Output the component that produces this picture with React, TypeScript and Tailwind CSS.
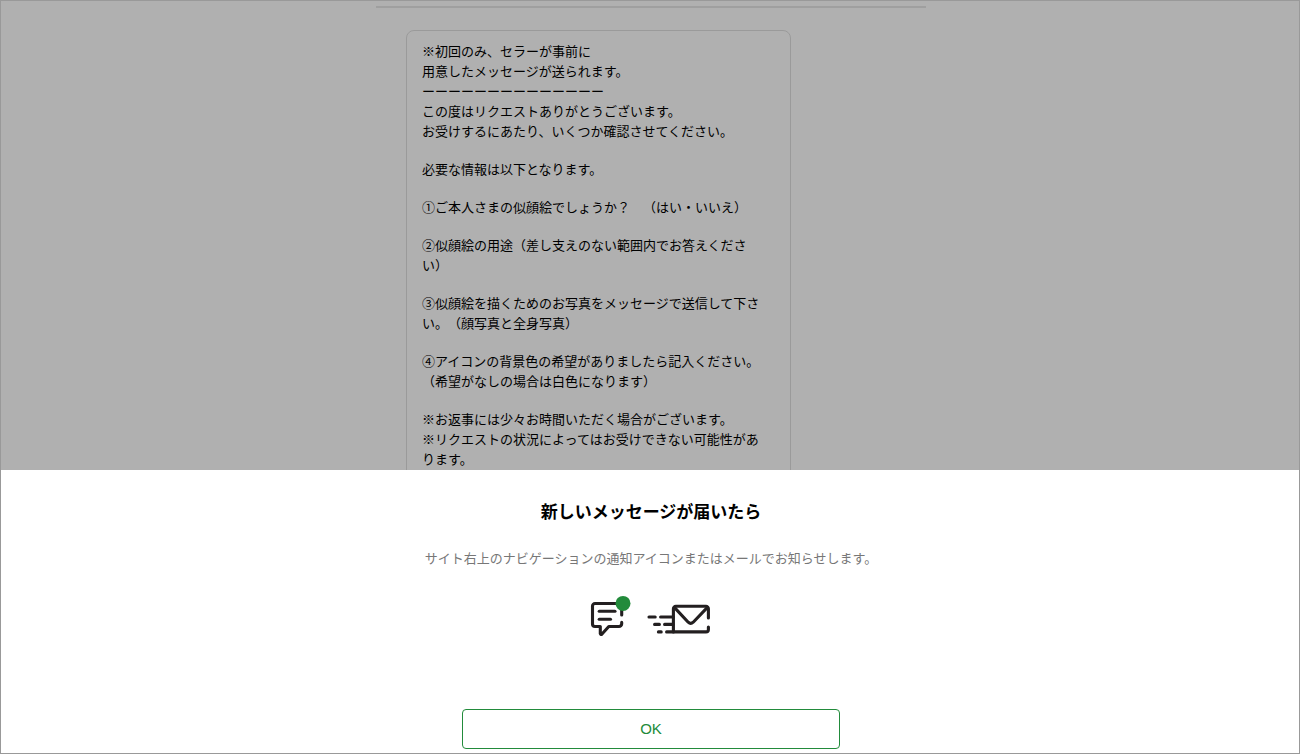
import React, { ReactNode } from 'react';

interface MessageBlock {
  lines: string[];
}

const messageBlocks: MessageBlock[] = [
  {
    lines: [
      '※初回のみ、セラーが事前に',
      '用意したメッセージが送られます。',
      'ーーーーーーーーーーーーーー',
      'この度はリクエストありがとうございます。',
      'お受けするにあたり、いくつか確認させてください。',
    ],
  },
  { lines: ['必要な情報は以下となります。'] },
  { lines: ['①ご本人さまの似顔絵でしょうか？　（はい・いいえ）'] },
  { lines: ['②似顔絵の用途（差し支えのない範囲内でお答えください）'] },
  { lines: ['③似顔絵を描くためのお写真をメッセージで送信して下さい。（顔写真と全身写真）'] },
  {
    lines: [
      '④アイコンの背景色の希望がありましたら記入ください。',
      '（希望がなしの場合は白色になります）',
    ],
  },
  {
    lines: [
      '※お返事には少々お時間いただく場合がございます。',
      '※リクエストの状況によってはお受けできない可能性があります。',
    ],
  },
];

const ChatIcon: React.FC = () => (
  <svg width="42" height="42" viewBox="0 0 42 42" fill="none" aria-hidden="true">
    <g stroke="#231f20" strokeWidth="3.1" strokeLinecap="round" strokeLinejoin="round">
      <path d="M27 8.5H5A2.5 2.5 0 0 0 2.5 11V29A2.5 2.5 0 0 0 5 31.5H10.3V38.6Q10.7 40.2 12 39L18.8 31.5H29A2.7 2.7 0 0 0 31.7 28.8V27.4" />
      <path d="M31.7 15V20" />
      <path d="M9.2 16.3H25" />
      <path d="M9.2 24.3H20.5" />
    </g>
    <circle cx="33" cy="8.4" r="7.5" fill="#228b3b" />
  </svg>
);

const MailIcon: React.FC = () => (
  <svg width="66" height="42" viewBox="0 0 66 42" fill="none" aria-hidden="true">
    <g stroke="#231f20" strokeWidth="3.1" strokeLinecap="round" strokeLinejoin="round">
      <path d="M62.4 23V13.7A2.4 2.4 0 0 0 60 11.3H29.8A2.4 2.4 0 0 0 27.4 13.7V36.9" />
      <path d="M62.4 32V34.5A2.4 2.4 0 0 1 60 36.9H20.6" />
      <path d="M28.6 12.6L42.2 27.2Q44.7 29.6 47.2 27.2L61.2 12.6" />
      <path d="M3 22H9.2M14.6 22H27" />
      <path d="M8.6 29.4H13.4M18.6 29.4H27" />
      <path d="M12.4 36.9H15.2" />
    </g>
  </svg>
);

// Page content that stays visible, dimmed, above the sheet
const DimmedPage: React.FC<{ children: ReactNode }> = ({ children }) => (
  <main className="relative flex-1 min-h-0 overflow-hidden bg-white">
    <div className="pl-0.5">{children}</div>
    <div className="absolute inset-0 bg-black/31" />
  </main>
);

const MessageCard: React.FC = () => (
  <div className="mx-auto w-full max-w-[550px]">
    <hr className="mt-[5px] border-t-2 border-[#e6e6e6]" />
    <div className="ml-[30px] mt-[22px] max-w-[385px] rounded-lg border border-[#e0e0e0] pt-2.5 pr-5 pb-4 pl-[15px] text-[13px] leading-5 text-black">
      {messageBlocks.map((block, index) => (
        <div key={index} className="mb-[18px]">
          {block.lines.map((line) => (
            <p key={line}>{line}</p>
          ))}
        </div>
      ))}
    </div>
  </div>
);

const NotificationSheet: React.FC = () => (
  <section
    role="dialog"
    aria-labelledby="sheet-title"
    className="flex shrink-0 flex-col items-center bg-white pt-[29px] pb-1 pl-0.5"
  >
    <h2 id="sheet-title" className="text-[17px] leading-6 font-bold text-black">
      新しいメッセージが届いたら
    </h2>
    <p className="mt-[25px] text-[13px] leading-5 text-[#777777]">
      サイト右上のナビゲーションの通知アイコンまたはメールでお知らせします。
    </p>
    <div className="mt-[27px] flex gap-3.5">
      <ChatIcon />
      <MailIcon />
    </div>
    <button
      type="button"
      className="mt-[72px] h-10 w-full max-w-[378px] rounded border border-[#228b3b] bg-white pt-px font-['Liberation_Sans',sans-serif] text-[15px] text-[#228b3b]"
    >
      OK
    </button>
  </section>
);

export default function App() {
  return (
    <div
      lang="ja"
      className="flex h-screen flex-col overflow-hidden border border-[#999999] font-['Noto_Sans_CJK_JP',sans-serif] [text-spacing-trim:space-all]"
    >
      <DimmedPage>
        <MessageCard />
      </DimmedPage>
      <NotificationSheet />
    </div>
  );
}
